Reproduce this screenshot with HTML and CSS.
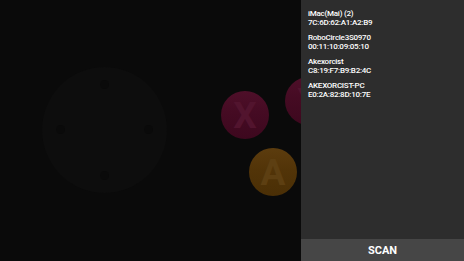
FILE: index.html
```html
<!DOCTYPE html>
<html>
<head>
<meta charset="utf-8">
<link rel="stylesheet" href="styles.css">
</head>
<body>
<div class="screen">
  <div class="pad">
    <div class="stick">
      <span class="dot dot-up"></span>
      <span class="dot dot-left"></span>
      <span class="dot dot-right"></span>
      <span class="dot dot-down"></span>
    </div>
    <div class="btn btn-x"><span>X</span></div>
    <div class="btn btn-y"><span>Y</span></div>
    <div class="btn btn-a"><span>A</span></div>
  </div>
  <div class="panel">
    <ul class="devices">
      <li><div>iMac(Mai) (2)</div><div>7C:6D:62:A1:A2:B9</div></li>
      <li><div>RoboCircle3S0970</div><div>00:11:10:09:05:10</div></li>
      <li><div>Akexorcist</div><div>C8:19:F7:B9:B2:4C</div></li>
      <li><div>AKEXORCIST-PC</div><div>E0:2A:82:8D:10:7E</div></li>
    </ul>
    <div class="scan">SCAN</div>
  </div>
</div>
</body>
</html>
```
FILE: styles.css
```css
html, body {
  margin: 0;
  padding: 0;
  background: #0a0a0a;
}
.screen {
  display: flex;
  width: 464px;
  height: 261px;
  overflow: hidden;
  font-family: Roboto, "Liberation Sans", sans-serif;
}
.pad {
  position: relative;
  width: 301px;
  height: 261px;
  overflow: hidden;
  background: #0a0a0a;
}
.stick {
  position: absolute;
  left: 42px;
  top: 67px;
  width: 125px;
  height: 126px;
  border-radius: 50%;
  background: #0d0d0d;
}
.dot {
  position: absolute;
  width: 9px;
  height: 9px;
  border-radius: 50%;
  background: #0a0a0a;
}
.dot-up { left: 58px; top: 13px; }
.dot-left { left: 14px; top: 58px; }
.dot-right { left: 102px; top: 58px; }
.dot-down { left: 58px; top: 104px; }
.btn {
  position: absolute;
  width: 48px;
  height: 48px;
  border-radius: 50%;
  display: flex;
  align-items: center;
  justify-content: center;
  font-family: Roboto, "Liberation Sans", sans-serif;
  font-weight: bold;
  font-size: 37px;
  line-height: 1;
}
.btn-x, .btn-y {
  background: linear-gradient(180deg, #4e0f29 0%, #450b23 45%, #3d081e 100%);
  color: #52142e;
}
.btn-a {
  background: linear-gradient(180deg, #5c3c0e 0%, #523408 45%, #4a2f06 100%);
  color: #5d3f12;
}
.btn-x { left: 221px; top: 91px; }
.btn-y { left: 285px; top: 77px; }
.btn-a { left: 249px; top: 148px; }
.panel {
  width: 163px;
  height: 261px;
  background: #2d2d2d;
  display: flex;
  flex-direction: column;
}
.devices {
  list-style: none;
  margin: 0;
  padding: 9px 0 0 7px;
  flex: 1;
  display: flex;
  flex-direction: column;
  gap: 6px;
  color: #ffffff;
  font-size: 8px;
  font-weight: 500;
  letter-spacing: -0.25px;
  line-height: 9px;
}
.scan {
  height: 22px;
  background: #464646;
  color: #ffffff;
  font-weight: bold;
  font-size: 11px;
  display: flex;
  align-items: center;
  justify-content: center;
}
```
